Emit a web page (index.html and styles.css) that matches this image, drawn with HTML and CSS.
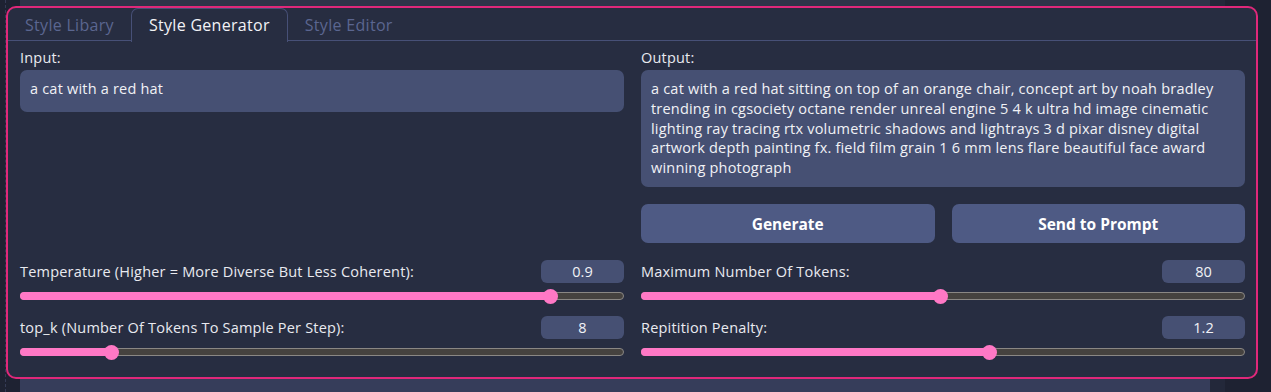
FILE: index.html
```html
<!DOCTYPE html>
<html lang="en">
<head>
    <meta charset="UTF-8">
    <meta name="viewport" content="width=device-width, initial-scale=1.0">
    <title>Style Generator</title>
    <link rel="stylesheet" href="styles.css">
</head>
<body>
    <div class="backdrop"></div>
    <div class="side-line"></div>

    <div class="panel">
        <div class="tabs">
            <div class="tab">Style Libary</div>
            <div class="tab active">Style Generator</div>
            <div class="tab">Style Editor</div>
        </div>

        <div class="panel-body">
            <div class="top-grid">
                <div class="field">
                    <label class="label">Input:</label>
                    <div class="textbox input-box">a cat with a red hat</div>
                </div>
                <div class="field">
                    <label class="label">Output:</label>
                    <div class="textbox output-box">a cat with a red hat sitting on top of an orange chair, concept art by noah bradley trending in cgsociety octane render unreal engine 5 4 k ultra hd image cinematic lighting ray tracing rtx volumetric shadows and lightrays 3 d pixar disney digital artwork depth painting fx. field film grain 1 6 mm lens flare beautiful face award winning photograph</div>
                    <div class="buttons">
                        <button class="button">Generate</button>
                        <button class="button">Send to Prompt</button>
                    </div>
                </div>
            </div>

            <div class="sliders">
                <div class="slider">
                    <div class="slider-head">
                        <span class="label">Temperature (Higher = More Diverse But Less Coherent):</span>
                        <span class="number">0.9</span>
                    </div>
                    <div class="track"><div class="fill" style="width: 88%"></div><div class="thumb" style="left: 88%"></div></div>
                </div>
                <div class="slider">
                    <div class="slider-head">
                        <span class="label">Maximum Number Of Tokens:</span>
                        <span class="number">80</span>
                    </div>
                    <div class="track"><div class="fill" style="width: 49.6%"></div><div class="thumb" style="left: 49.6%"></div></div>
                </div>
                <div class="slider">
                    <div class="slider-head">
                        <span class="label">top_k (Number Of Tokens To Sample Per Step):</span>
                        <span class="number">8</span>
                    </div>
                    <div class="track"><div class="fill" style="width: 15%"></div><div class="thumb" style="left: 15%"></div></div>
                </div>
                <div class="slider">
                    <div class="slider-head">
                        <span class="label">Repitition Penalty:</span>
                        <span class="number">1.2</span>
                    </div>
                    <div class="track"><div class="fill" style="width: 57.7%"></div><div class="thumb" style="left: 57.7%"></div></div>
                </div>
            </div>
        </div>
    </div>
</body>
</html>
```

FILE: styles.css
```css
* {
    margin: 0;
    padding: 0;
    box-sizing: border-box;
}

body {
    font-family: 'Open Sans', 'Noto Sans', sans-serif;
    background-color: #1e2232;
    color: #e9eaf0;
    height: 392px;
    overflow: hidden;
    position: relative;
    padding: 6px 13px 0 6px;
}

/* page behind the panel */
.backdrop {
    position: absolute;
    top: 0;
    left: 20px;
    width: 1205px;
    height: 392px;
    background: linear-gradient(#2f3449 0, #2f3449 200px, #363d5a 200px);
    border-right: 15px solid #23283a;
    z-index: 0;
}

.side-line {
    position: absolute;
    top: 0;
    left: 5px;
    height: 392px;
    border-left: 1px dashed #353b55;
}

.panel {
    position: relative;
    z-index: 1;
    width: 1252px;
    height: 373px;
    background-color: #272d41;
    border: 2px solid #e0287a;
    border-radius: 10px;
}

.tabs {
    display: flex;
    height: 33px;
    border-bottom: 1px solid #475077;
}

.tab {
    padding: 0 16px;
    font-size: 16px;
    letter-spacing: 0.3px;
    line-height: 32px;
    color: #5b6690;
    border: 1px solid transparent;
    border-bottom: none;
}

.tab.active {
    color: #f2f2f6;
    background-color: #272d41;
    border-color: #475077;
    border-radius: 7px 7px 0 0;
    height: 34px;
    margin-bottom: -1px;
    padding: 0 17px;
}

.panel-body {
    padding: 7px 11px 0 12px;
}

.top-grid,
.sliders {
    display: grid;
    grid-template-columns: 1fr 1fr;
    column-gap: 17px;
}

.sliders {
    row-gap: 16px;
    margin-top: 17px;
}

.label {
    display: block;
    font-size: 14.5px;
    letter-spacing: 0.2px;
    line-height: 20px;
    color: #e9eaf0;
}

.field .label {
    margin-bottom: 2px;
}

.textbox {
    background-color: #465073;
    border-radius: 7px;
    padding: 9px 10px;
    font-size: 14.5px;
    letter-spacing: 0.2px;
    line-height: 19.8px;
    color: #f1f2f6;
}

.input-box {
    height: 42px;
}

.output-box {
    height: 117px;
}

.buttons {
    display: grid;
    grid-template-columns: 1fr 1fr;
    gap: 17px;
    margin-top: 17px;
}

.button {
    height: 39px;
    background-color: #4e5a84;
    color: #fff;
    border: none;
    border-radius: 7px;
    font-family: inherit;
    font-size: 15.5px;
    font-weight: bold;
}

.slider-head {
    display: flex;
    justify-content: space-between;
    align-items: center;
    height: 23px;
}

.number {
    width: 83px;
    height: 23px;
    line-height: 23px;
    background-color: #465073;
    border-radius: 6px;
    text-align: center;
    font-size: 14.5px;
    color: #f1f2f6;
}

.track {
    position: relative;
    margin-top: 9px;
    height: 8px;
    background-color: #45423f;
    border: 1px solid #8a8784;
    border-radius: 4px;
}

.fill {
    position: absolute;
    top: -1px;
    left: -1px;
    height: 8px;
    background-color: #ff78c5;
    border-radius: 4px;
}

.thumb {
    position: absolute;
    top: 50%;
    width: 15px;
    height: 15px;
    margin: -7.5px 0 0 -7.5px;
    background-color: #ff78c5;
    border-radius: 50%;
}
```
